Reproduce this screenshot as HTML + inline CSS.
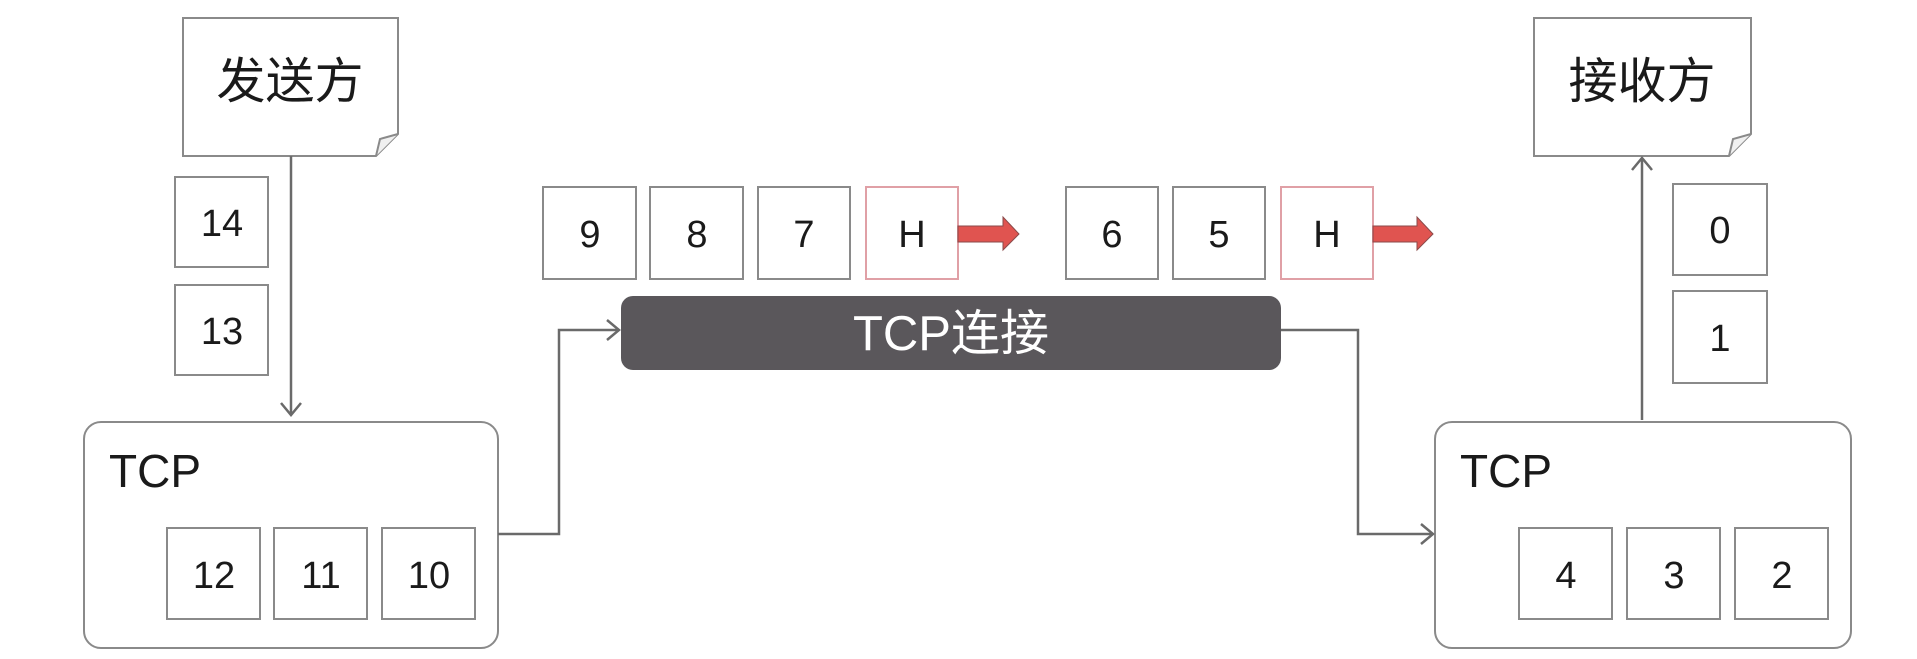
<!DOCTYPE html>
<html><head><meta charset="utf-8"><style>
html,body{margin:0;padding:0;background:#fff;width:1917px;height:659px;overflow:hidden}
svg{display:block}
text{font-family:"Liberation Sans","Noto Sans CJK SC",sans-serif;fill:#1a1a1a}
</style></head><body>
<svg width="1917" height="659" viewBox="0 0 1917 659" xmlns="http://www.w3.org/2000/svg">
<g fill="#fff" stroke="#8a8a8a" stroke-width="2">
<path d="M183,18 H398 V134 L376,156 H183 Z"/>
<path d="M376,156 L380,139 L398,134" fill="#f0f0f0"/>
<path d="M1534,18 H1751 V134 L1729,156 H1534 Z"/>
<path d="M1729,156 L1733,139 L1751,134" fill="#f0f0f0"/>
<rect x="84" y="422" width="414" height="226" rx="17"/>
<rect x="1435" y="422" width="416" height="226" rx="17"/>
<rect x="175" y="177" width="93" height="90"/>
<rect x="175" y="285" width="93" height="90"/>
<rect x="167" y="528" width="93" height="91"/>
<rect x="274" y="528" width="93" height="91"/>
<rect x="382" y="528" width="93" height="91"/>
<rect x="1673" y="184" width="94" height="91"/>
<rect x="1673" y="291" width="94" height="92"/>
<rect x="1519" y="528" width="93" height="91"/>
<rect x="1627" y="528" width="93" height="91"/>
<rect x="1735" y="528" width="93" height="91"/>
<rect x="543" y="187" width="93" height="92"/>
<rect x="650" y="187" width="93" height="92"/>
<rect x="758" y="187" width="92" height="92"/>
<rect x="1066" y="187" width="92" height="92"/>
<rect x="1173" y="187" width="92" height="92"/>
</g>
<g fill="#fff" stroke="#e0a0a6" stroke-width="2">
<rect x="866" y="187" width="92" height="92"/>
<rect x="1281" y="187" width="92" height="92"/>
</g>
<g fill="#e05450" stroke="#8a4a4a" stroke-width="1">
<path d="M958,226 H1003 V217 L1019,234 L1003,250 V242 H958 Z"/>
<path d="M1373,226 H1417 V217 L1433,234 L1417,250 V242 H1373 Z"/>
</g>
<rect x="621" y="296" width="660" height="74" rx="12" fill="#5a575b"/>
<text x="951" y="350" font-size="49" text-anchor="middle" style="fill:#fff">TCP连接</text>
<g fill="none" stroke="#6a6a6a" stroke-width="2.5">
<path d="M291,156 V415"/>
<path d="M281,403 L291,415 L301,403"/>
<path d="M498,534 H559 V330 H619"/>
<path d="M607,320 L619,330 L607,340"/>
<path d="M1281,330 H1358 V534 H1433"/>
<path d="M1421,524 L1433,534 L1421,544"/>
<path d="M1642,420 V158"/>
<path d="M1632,170 L1642,158 L1652,170"/>
</g>
<g font-size="49">
<text x="290" y="98" text-anchor="middle">发送方</text>
<text x="1642" y="98" text-anchor="middle">接收方</text>
</g>
<g font-size="46">
<text x="109" y="487">TCP</text>
<text x="1460" y="487">TCP</text>
</g>
<g font-size="38" text-anchor="middle">
<text x="222" y="236">14</text>
<text x="222" y="344">13</text>
<text x="214" y="588">12</text>
<text x="321" y="588">11</text>
<text x="429" y="588">10</text>
<text x="1720" y="243">0</text>
<text x="1720" y="351">1</text>
<text x="1566" y="588">4</text>
<text x="1674" y="588">3</text>
<text x="1782" y="588">2</text>
<text x="590" y="247">9</text>
<text x="697" y="247">8</text>
<text x="804" y="247">7</text>
<text x="912" y="247">H</text>
<text x="1112" y="247">6</text>
<text x="1219" y="247">5</text>
<text x="1327" y="247">H</text>
</g>
</svg>
</body></html>
